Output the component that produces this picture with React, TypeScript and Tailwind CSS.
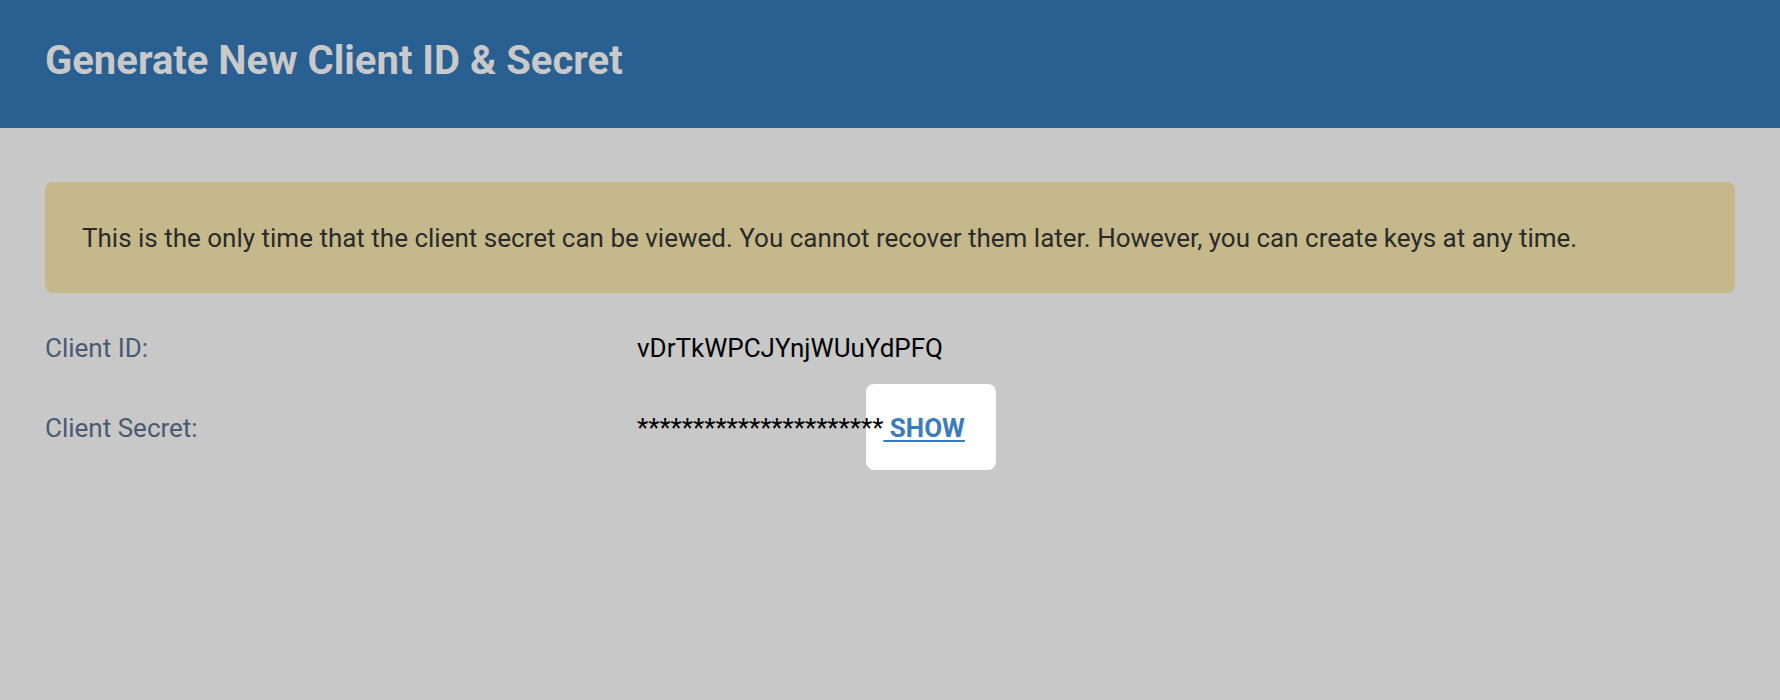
const font = { fontFamily: "Roboto, 'Noto Sans', sans-serif" };

function Header() {
  return (
    <header className="h-[128px] bg-[#295f91] px-[45px] pt-[37px]">
      <h1 className="text-[40px] leading-[48px] font-bold text-[#c9c9c9]">
        Generate New Client ID &amp; Secret
      </h1>
    </header>
  );
}

function Notice() {
  return (
    <div className="flex h-[111px] items-center rounded-lg bg-[#c5b98b] px-[37px]">
      <p className="text-[26px] leading-[30px] text-[#2a2a2a]">
        This is the only time that the client secret can be viewed. You cannot recover them later. However, you can
        create keys at any time.
      </p>
    </div>
  );
}

function Row({ label, children }: { label: string; children: React.ReactNode }) {
  return (
    <div className="flex text-[26px] leading-[30px]">
      <div className="w-[592px] shrink-0 text-[#4a5a72]">{label}</div>
      <div className="isolate text-black">{children}</div>
    </div>
  );
}

export default function App() {
  return (
    <div className="min-h-[700px] bg-[#c8c8c8]" style={font}>
      <Header />
      <main className="px-[45px] pt-[54px]">
        <Notice />
        <div className="mt-[40px] flex flex-col gap-[50px]">
          <Row label="Client ID:">vDrTkWPCJYnjWUuYdPFQ</Row>
          <Row label="Client Secret:">
            <span>**********************</span>
            <a href="#" className="relative font-bold text-[#3a7bbf] underline underline-offset-[3px]">
              <span className="absolute -left-[17px] -top-[29px] -z-10 h-[86px] w-[130px] rounded-lg bg-white" />
              {" SHOW"}
            </a>
          </Row>
        </div>
      </main>
    </div>
  );
}
